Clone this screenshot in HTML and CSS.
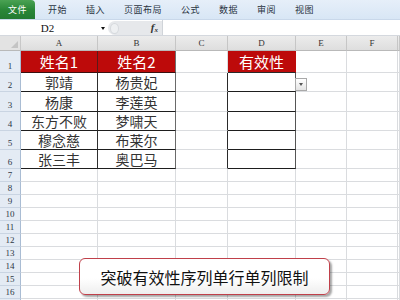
FILE: index.html
```html
<!DOCTYPE html>
<html lang="zh-CN">
<head>
<meta charset="utf-8">
<title>有效性</title>
<link rel="stylesheet" href="styles.css">
</head>
<body>
<div class="app">
  <div class="tabs">
    <div class="tab file">文件</div>
    <div class="tab">开始</div>
    <div class="tab">插入</div>
    <div class="tab">页面布局</div>
    <div class="tab">公式</div>
    <div class="tab">数据</div>
    <div class="tab">审阅</div>
    <div class="tab">视图</div>
  </div>
  <div class="fbar">
    <div class="namebox">D2</div>
    <div class="nb-arrow"></div>
    <div class="fx-area"><span class="knob"></span><span class="fx">f<sub>x</sub></span></div>
    <div class="finput"></div>
  </div>
  <div class="sheet">
    <div class="corner"></div><div class="ch">A</div><div class="ch">B</div><div class="ch">C</div><div class="ch">D</div><div class="ch">E</div><div class="ch">F</div><div class="ch"></div>

    <div class="rh">1</div><div class="c hd">姓名1</div><div class="c hd hd-b">姓名2</div><div class="c"></div><div class="c hd hd-d">有效性</div><div class="c"></div><div class="c"></div><div class="c"></div>
    <div class="rh">2</div><div class="c d">郭靖</div><div class="c d d-b">杨贵妃</div><div class="c dl"></div><div class="c v"></div><div class="c"></div><div class="c"></div><div class="c"></div>
    <div class="rh">3</div><div class="c d">杨康</div><div class="c d d-b">李莲英</div><div class="c dl"></div><div class="c v"></div><div class="c"></div><div class="c"></div><div class="c"></div>
    <div class="rh">4</div><div class="c d">东方不败</div><div class="c d d-b">梦啸天</div><div class="c dl"></div><div class="c v"></div><div class="c"></div><div class="c"></div><div class="c"></div>
    <div class="rh">5</div><div class="c d">穆念慈</div><div class="c d d-b">布莱尔</div><div class="c dl"></div><div class="c v"></div><div class="c"></div><div class="c"></div><div class="c"></div>
    <div class="rh">6</div><div class="c d">张三丰</div><div class="c d d-b">奥巴马</div><div class="c dl"></div><div class="c v"></div><div class="c"></div><div class="c"></div><div class="c"></div>
    <div class="rh">7</div><div class="c"></div><div class="c"></div><div class="c"></div><div class="c"></div><div class="c"></div><div class="c"></div><div class="c"></div>
    <div class="rh">8</div><div class="c"></div><div class="c"></div><div class="c"></div><div class="c"></div><div class="c"></div><div class="c"></div><div class="c"></div>
    <div class="rh">9</div><div class="c"></div><div class="c"></div><div class="c"></div><div class="c"></div><div class="c"></div><div class="c"></div><div class="c"></div>
    <div class="rh">10</div><div class="c"></div><div class="c"></div><div class="c"></div><div class="c"></div><div class="c"></div><div class="c"></div><div class="c"></div>
    <div class="rh">11</div><div class="c"></div><div class="c"></div><div class="c"></div><div class="c"></div><div class="c"></div><div class="c"></div><div class="c"></div>
    <div class="rh">12</div><div class="c"></div><div class="c"></div><div class="c"></div><div class="c"></div><div class="c"></div><div class="c"></div><div class="c"></div>
    <div class="rh">13</div><div class="c"></div><div class="c"></div><div class="c"></div><div class="c"></div><div class="c"></div><div class="c"></div><div class="c"></div>
    <div class="rh">14</div><div class="c"></div><div class="c"></div><div class="c"></div><div class="c"></div><div class="c"></div><div class="c"></div><div class="c"></div>
    <div class="rh">15</div><div class="c"></div><div class="c"></div><div class="c"></div><div class="c"></div><div class="c"></div><div class="c"></div><div class="c"></div>
    <div class="rh">16</div><div class="c"></div><div class="c"></div><div class="c"></div><div class="c"></div><div class="c"></div><div class="c"></div><div class="c"></div>
    <div class="rh"></div><div class="c"></div><div class="c"></div><div class="c"></div><div class="c"></div><div class="c"></div><div class="c"></div><div class="c"></div>

    <div class="dd-btn"><span></span></div>
  </div>
  <div class="callout">突破有效性序列单行单列限制</div>
</div>
</body>
</html>
```
FILE: styles.css
```css
html, body {
  margin: 0;
  padding: 0;
  background: #ffffff;
  overflow: hidden;
}
.app {
  position: relative;
  width: 400px;
  height: 300px;
  overflow: hidden;
  font-family: "Noto Sans CJK SC", "Noto Sans", sans-serif;
}
.tabs {
  height: 20px;
  box-sizing: border-box;
  display: flex;
  align-items: stretch;
  background: linear-gradient(#e6eff9, #d8e6f5);
  border-bottom: 1px solid #c9d8ea;
}
.tab {
  font-size: 9px;
  color: #2a3442;
  display: flex;
  align-items: center;
  margin-left: 19px;
  letter-spacing: 0.5px;
}
.tab.file {
  margin-left: 0;
  width: 35px;
  justify-content: center;
  color: #ffffff;
  border-radius: 0 4px 0 0;
  background: linear-gradient(#4aa253, #2a8738 50%, #237a31);
}
.tab.file + .tab { margin-left: 13px; }
.fbar {
  height: 16px;
  box-sizing: border-box;
  display: flex;
  align-items: stretch;
  border-bottom: 1px solid #d4d8de;
  background: #ffffff;
}
.namebox {
  width: 95px;
  font-family: "Liberation Serif", serif;
  font-size: 11px;
  color: #111;
  display: flex;
  align-items: center;
  justify-content: center;
}
.nb-arrow {
  width: 13px;
  position: relative;
}
.nb-arrow::after {
  content: "";
  position: absolute;
  left: 6px;
  top: 7px;
  border-left: 2.5px solid transparent;
  border-right: 2.5px solid transparent;
  border-top: 3px solid #111;
}
.fx-area {
  width: 54px;
  margin: 1px 0 0 0;
  background: #e6e8eb;
  border-radius: 7px 0 0 7px;
  display: flex;
  align-items: center;
  justify-content: space-between;
  padding: 0 4px 0 2px;
  box-sizing: border-box;
}
.knob {
  width: 9px;
  height: 11px;
  border-radius: 50%;
  background: #eef0f2;
  border: 1px solid #d6d9dd;
  box-sizing: border-box;
}
.fx {
  font-family: "Liberation Serif", serif;
  font-style: italic;
  font-weight: bold;
  font-size: 11px;
  color: #333;
  line-height: 1;
}
.fx sub {
  font-size: 7px;
  vertical-align: -1px;
}
.finput {
  flex: 1;
  border-left: 1px solid #d0d4d9;
}
.sheet {
  position: relative;
  display: grid;
  grid-template-columns: 21px 77px 78px 52px 68px 51px 51px 1fr;
  grid-template-rows: 15px 22px 19px 20px 19px 19px 19px repeat(11, 13px);
}
.sheet > div {
  box-sizing: border-box;
}
.corner {
  background: #e3e3e3;
  border-right: 1px solid #c8c8c8;
  border-bottom: 1px solid #b9b9b9;
  position: relative;
}
.corner::after {
  content: "";
  position: absolute;
  right: 2px;
  bottom: 2px;
  border-left: 7px solid transparent;
  border-bottom: 7px solid #c4c4c4;
}
.ch {
  background: linear-gradient(#ececec, #dedede);
  border-right: 1px solid #c6c6c6;
  border-bottom: 1px solid #b9b9b9;
  font-family: "Liberation Serif", serif;
  font-size: 9px;
  color: #333;
  display: flex;
  align-items: center;
  justify-content: center;
}
.rh {
  background: #e4ebf4;
  border-right: 1px solid #a9bcd3;
  border-bottom: 1px solid #c9d4e2;
  font-family: "Liberation Serif", serif;
  font-size: 9px;
  color: #2d3746;
  display: flex;
  align-items: flex-end;
  justify-content: center;
  line-height: 11px;
}
.c {
  border-right: 1px solid #dadcdf;
  border-bottom: 1px solid #dadcdf;
  display: flex;
  align-items: center;
  justify-content: center;
}
.hd {
  background: #bd0a0a;
  color: #ffffff;
  font-size: 15px;
  border-right-color: #5a1a1a;
  border-bottom-color: #3a1010;
}
.hd-b { border-right-color: #707070; }
.hd-d {
  border-right-color: #bd0a0a;
  border-bottom-color: #2a2a2a;
}
.d {
  font-size: 14px;
  color: #333333;
  border-right-color: #2e2e2e;
  border-bottom-color: #1e1e1e;
}
.d-b { border-right-color: #6a6a6a; }
.dl { border-right-color: #2a2a2a; }
.v {
  border-right-color: #555555;
  border-bottom-color: #1e1e1e;
}
.dd-btn {
  position: absolute;
  left: 295px;
  top: 42px;
  width: 12px;
  height: 13px;
  background: linear-gradient(#ffffff, #e4e4e4);
  border: 1px solid #a9a9a9;
  box-sizing: border-box;
}
.dd-btn span {
  position: absolute;
  left: 3px;
  top: 4px;
  border-left: 2.5px solid transparent;
  border-right: 2.5px solid transparent;
  border-top: 3px solid #555;
}
.callout {
  position: absolute;
  left: 79px;
  top: 258px;
  width: 251px;
  height: 37px;
  box-sizing: border-box;
  border: 1.5px solid #c0404a;
  border-radius: 6px;
  background: linear-gradient(#ffffff, #ffffff 55%, #eeeeee);
  box-shadow: 2px 2px 2px rgba(0, 0, 0, 0.35);
  display: flex;
  align-items: center;
  justify-content: center;
  font-size: 16px;
  color: #111111;
}
```
